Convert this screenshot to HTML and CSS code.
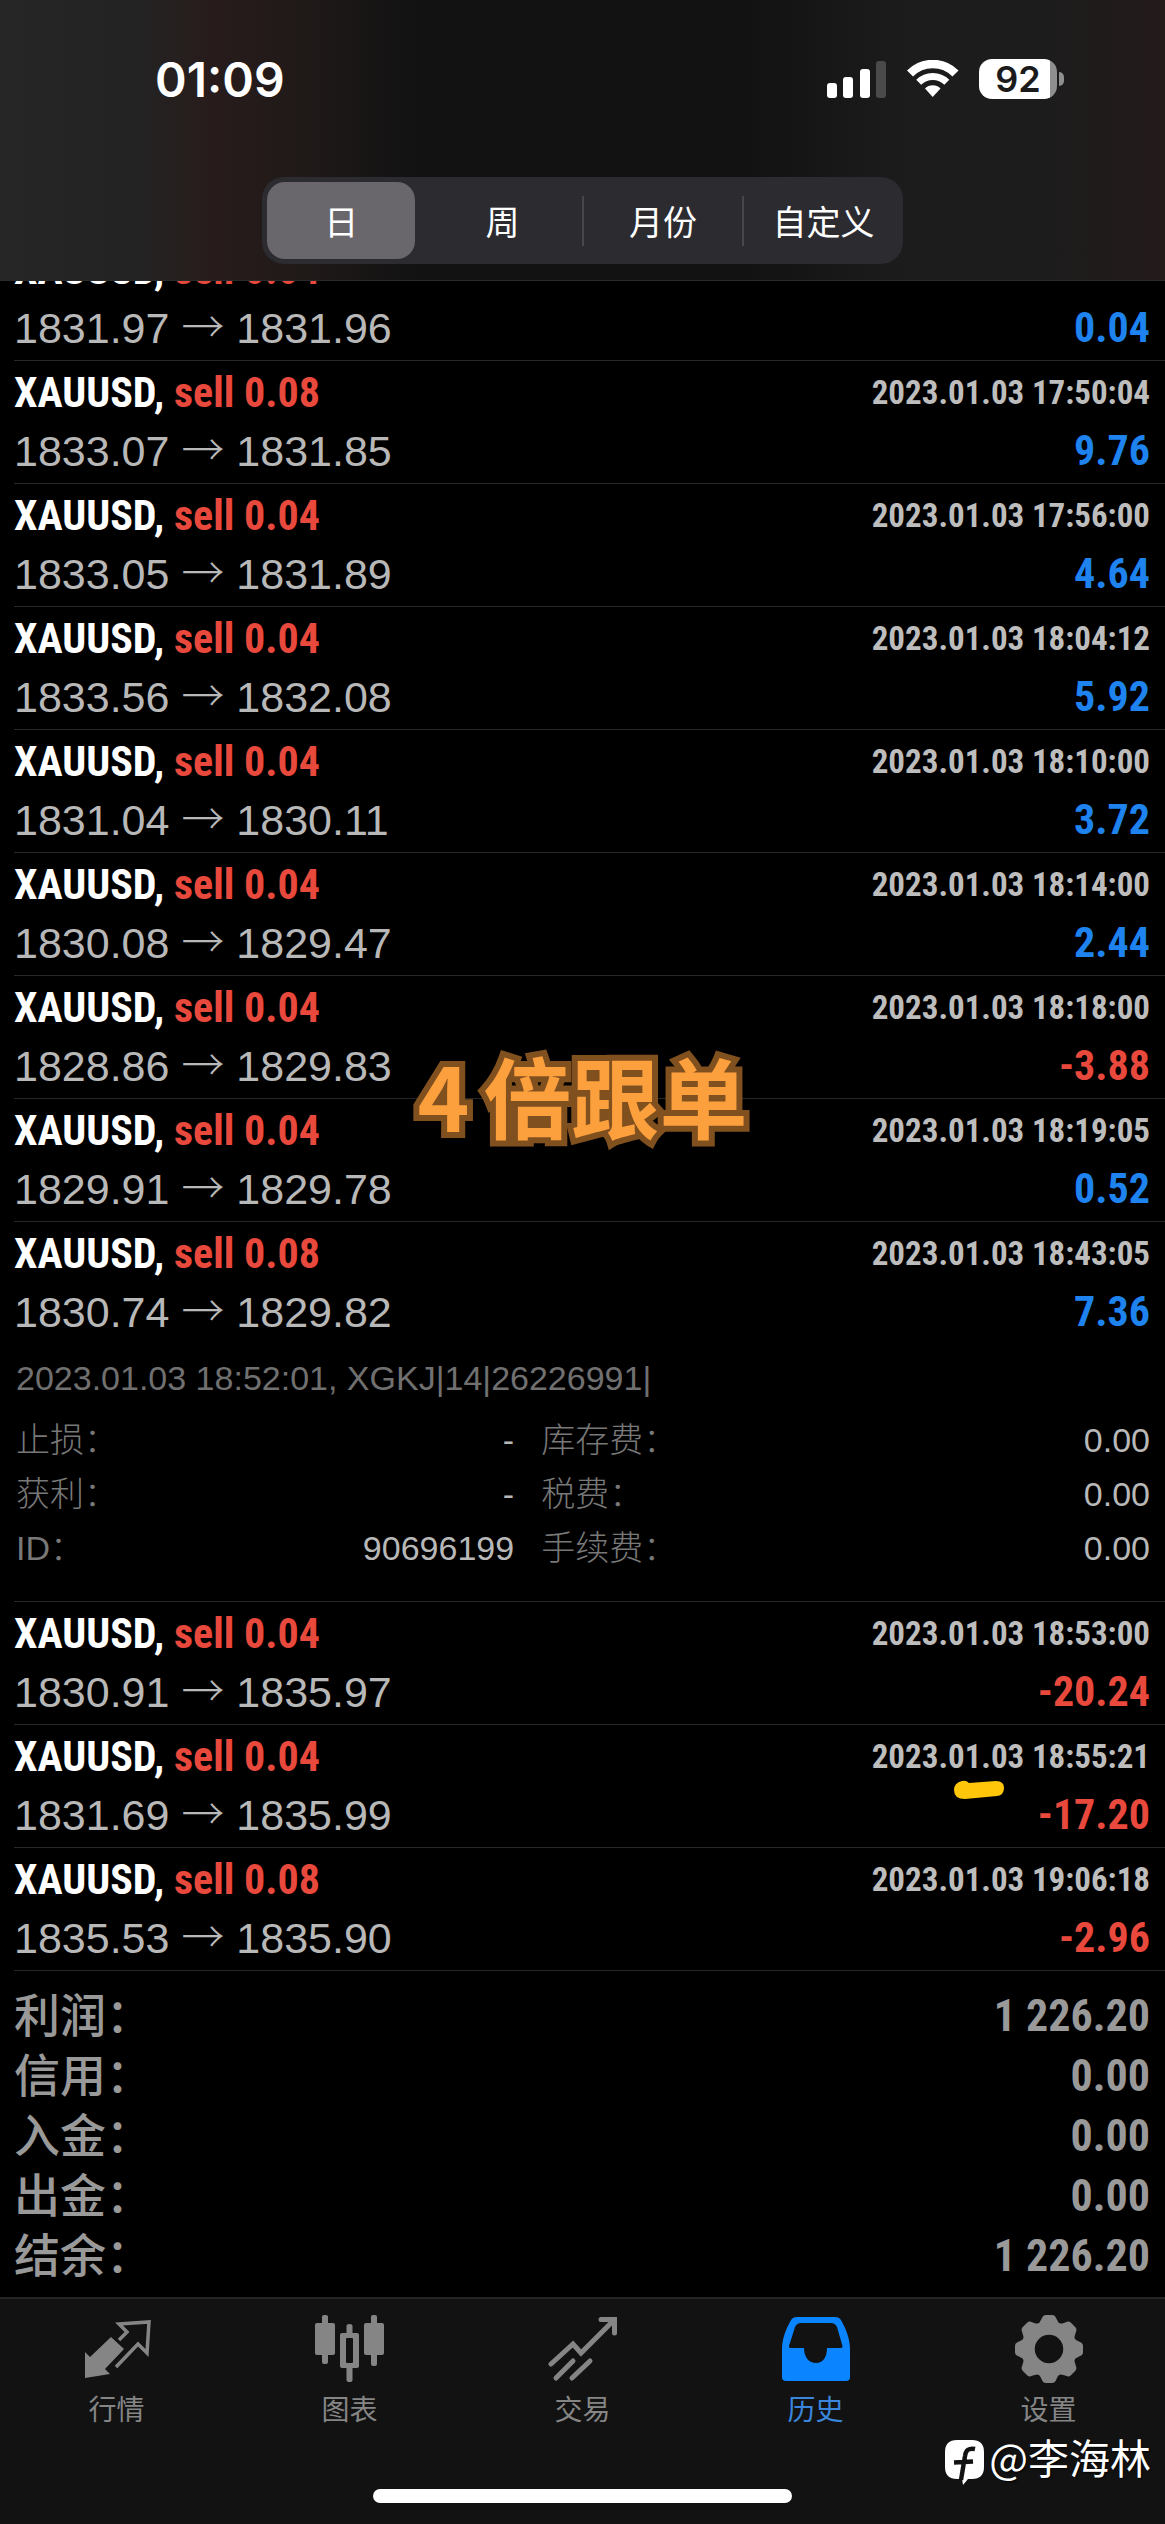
FILE: index.html
```html
<!DOCTYPE html>
<html lang="zh-CN">

<head>
  <meta charset="UTF-8">
  <meta name="viewport" content="width=device-width, initial-scale=1.0">
  <title>历史</title>
  <link rel="stylesheet" href="styles.css">
</head>

<body>
  <header class="header">
    <div class="status">
      <span class="time">01:09</span>
      <div class="status-icons">
        <svg class="signal" width="60" height="38" viewBox="0 0 60 38" fill="#fff">
          <rect x="0" y="23" width="10" height="15" rx="3" />
          <rect x="16" y="17" width="10" height="21" rx="3" />
          <rect x="33" y="9" width="10" height="29" rx="3" />
          <rect x="49" y="1" width="10" height="37" rx="3" fill="#4b4a4b" />
        </svg>
        <svg class="wifi" width="52" height="38" viewBox="0 0 52 38" fill="none" stroke="#fff">
          <path d="M3 13.5A32 32 0 0 1 48.500 13.500" stroke-width="8.500" />
          <path d="M11.700 22.200A20 20 0 0 1 39.800 22.200" stroke-width="7" />
          <path d="M18 28.500A11 11 0 0 1 33.500 28.500L25.700 37Z" fill="#fff" stroke="none" />
        </svg>
        <div class="battery"><span class="battery-level">92</span><span class="battery-tip"></span></div>
      </div>
    </div>
    <nav class="periods">
      <button type="button" class="active">日</button>
      <button type="button">周</button>
      <span class="sep"></span>
      <button type="button">月份</button>
      <span class="sep"></span>
      <button type="button">自定义</button>
    </nav>
  </header>

  <main class="history">
    <ul class="deals">
      <li class="deal">
        <div class="line"><b class="symbol">XAUUSD, <span class="sell">sell 0.04</span></b><time>2023.01.03 17:48:22</time></div>
        <div class="line"><span class="price">1831.97 <i>→</i> 1831.96</span><b class="profit">0.04</b></div>
      </li>
      <li class="deal">
        <div class="line"><b class="symbol">XAUUSD, <span class="sell">sell 0.08</span></b><time>2023.01.03 17:50:04</time></div>
        <div class="line"><span class="price">1833.07 <i>→</i> 1831.85</span><b class="profit">9.76</b></div>
      </li>
      <li class="deal">
        <div class="line"><b class="symbol">XAUUSD, <span class="sell">sell 0.04</span></b><time>2023.01.03 17:56:00</time></div>
        <div class="line"><span class="price">1833.05 <i>→</i> 1831.89</span><b class="profit">4.64</b></div>
      </li>
      <li class="deal">
        <div class="line"><b class="symbol">XAUUSD, <span class="sell">sell 0.04</span></b><time>2023.01.03 18:04:12</time></div>
        <div class="line"><span class="price">1833.56 <i>→</i> 1832.08</span><b class="profit">5.92</b></div>
      </li>
      <li class="deal">
        <div class="line"><b class="symbol">XAUUSD, <span class="sell">sell 0.04</span></b><time>2023.01.03 18:10:00</time></div>
        <div class="line"><span class="price">1831.04 <i>→</i> 1830.11</span><b class="profit">3.72</b></div>
      </li>
      <li class="deal">
        <div class="line"><b class="symbol">XAUUSD, <span class="sell">sell 0.04</span></b><time>2023.01.03 18:14:00</time></div>
        <div class="line"><span class="price">1830.08 <i>→</i> 1829.47</span><b class="profit">2.44</b></div>
      </li>
      <li class="deal">
        <div class="line"><b class="symbol">XAUUSD, <span class="sell">sell 0.04</span></b><time>2023.01.03 18:18:00</time></div>
        <div class="line"><span class="price">1828.86 <i>→</i> 1829.83</span><b class="profit loss">-3.88</b></div>
      </li>
      <li class="deal">
        <div class="line"><b class="symbol">XAUUSD, <span class="sell">sell 0.04</span></b><time>2023.01.03 18:19:05</time></div>
        <div class="line"><span class="price">1829.91 <i>→</i> 1829.78</span><b class="profit">0.52</b></div>
      </li>
      <li class="deal">
        <div class="line"><b class="symbol">XAUUSD, <span class="sell">sell 0.08</span></b><time>2023.01.03 18:43:05</time></div>
        <div class="line"><span class="price">1830.74 <i>→</i> 1829.82</span><b class="profit">7.36</b></div>
        <div class="details">
          <p class="comment">2023.01.03 18:52:01, XGKJ|14|26226991|</p>
          <dl>
            <div><dt>止损：</dt><dd>-</dd></div>
            <div><dt>库存费：</dt><dd>0.00</dd></div>
            <div><dt>获利：</dt><dd>-</dd></div>
            <div><dt>税费：</dt><dd>0.00</dd></div>
            <div><dt>ID：</dt><dd>90696199</dd></div>
            <div><dt>手续费：</dt><dd>0.00</dd></div>
          </dl>
        </div>
      </li>
      <li class="deal">
        <div class="line"><b class="symbol">XAUUSD, <span class="sell">sell 0.04</span></b><time>2023.01.03 18:53:00</time></div>
        <div class="line"><span class="price">1830.91 <i>→</i> 1835.97</span><b class="profit loss">-20.24</b></div>
      </li>
      <li class="deal">
        <div class="line"><b class="symbol">XAUUSD, <span class="sell">sell 0.04</span></b><time>2023.01.03 18:55:21</time></div>
        <div class="line"><span class="price">1831.69 <i>→</i> 1835.99</span><b class="profit loss">-17.20</b></div>
        <svg class="marker" width="52" height="20" viewBox="0 0 52 20">
          <path d="M9 1Q13 0 16 3L43 1Q51 1 51 8T44 16L12 19Q1 19 1 10Q1 3 9 1Z" fill="#ffc60a" />
        </svg>
      </li>
      <li class="deal">
        <div class="line"><b class="symbol">XAUUSD, <span class="sell">sell 0.08</span></b><time>2023.01.03 19:06:18</time></div>
        <div class="line"><span class="price">1835.53 <i>→</i> 1835.90</span><b class="profit loss">-2.96</b></div>
      </li>
    </ul>

    <dl class="totals">
      <div><dt>利润：</dt><dd>1 226.20</dd></div>
      <div><dt>信用：</dt><dd>0.00</dd></div>
      <div><dt>入金：</dt><dd>0.00</dd></div>
      <div><dt>出金：</dt><dd>0.00</dd></div>
      <div><dt>结余：</dt><dd>1 226.20</dd></div>
    </dl>

    <div class="caption"><span>4</span><span>倍跟单</span></div>
  </main>

  <footer class="footer">
    <nav class="tabs">
      <a href="#quotes">
        <svg width="70" height="68" viewBox="0 0 70 68" fill="none">
          <path d="M3 37L8 42L29 22L42 34L23 54L28 59L3 63Z" fill="#858585" />
          <path d="M37 25L45 17L37 9L67 7L65 38L56 29L34 52" stroke="#858585" stroke-width="3.500" />
        </svg>
        <span>行情</span>
      </a>
      <a href="#charts">
        <svg width="70" height="68" viewBox="0 0 70 68" fill="#858585">
          <rect x="0" y="8" width="20" height="32" rx="2" />
          <rect x="7" y="0" width="6" height="49" rx="2" />
          <path d="M27 18H42Q44 18 44 20V51Q44 53 42 53H27Q25 53 25 51V20Q25 18 27 18ZM31 24V47Q31 48 32 48H37Q38 48 38 47V24Q38 23 37 23H32Q31 23 31 24Z" fill-rule="evenodd" />
          <path d="M31.500 19V11Q31.500 9 34.500 9T37.500 11V19ZM31.500 52H37.500V65Q37.500 67 34.500 67T31.500 65Z" />
          <rect x="49" y="8" width="20" height="32" rx="2" />
          <rect x="56" y="0" width="6" height="51" rx="2" />
        </svg>
        <span>图表</span>
      </a>
      <a href="#trade">
        <svg width="70" height="68" viewBox="0 0 70 68" fill="none" stroke="#858585" stroke-width="5" stroke-linecap="round">
          <path d="M3 49L25 29L33 38L66 5" />
          <path d="M53 4.500H66.500V18" />
          <path d="M8 63L25 46M24 63L42 46" />
        </svg>
        <span>交易</span>
      </a>
      <a href="#history" class="active">
        <svg width="70" height="68" viewBox="0 0 70 68" fill="#0a84ff">
          <path fill-rule="evenodd" d="M1 34C1 24 5 14 9 7Q11 2 16 2H54Q59 2 61 7C65 14 69 24 69 34V62Q69 66 65 66H5Q1 66 1 62ZM9 33H23C23 42 28 48 35 48S46 42 46 33H60Q62 33 61.500 31L56 12Q54 8 50 8H20Q16 8 14 12L8 31Q8 33 9 33Z" />
        </svg>
        <span>历史</span>
      </a>
      <a href="#settings">
        <svg width="70" height="68" viewBox="0 0 70 68">
          <circle cx="35" cy="34" r="21" fill="none" stroke="#858585" stroke-width="13.500" />
          <g fill="#858585">
            <path id="tooth" d="M22 11Q26 8 28 3Q29 0 32 0H38Q41 0 42 3Q44 8 48 11Z" />
            <use href="#tooth" transform="rotate(45 35 34)" />
            <use href="#tooth" transform="rotate(90 35 34)" />
            <use href="#tooth" transform="rotate(135 35 34)" />
            <use href="#tooth" transform="rotate(180 35 34)" />
            <use href="#tooth" transform="rotate(225 35 34)" />
            <use href="#tooth" transform="rotate(270 35 34)" />
            <use href="#tooth" transform="rotate(315 35 34)" />
          </g>
        </svg>
        <span>设置</span>
      </a>
    </nav>
    <div class="home-bar"></div>
    <div class="watermark">
      <svg width="40" height="46" viewBox="0 0 40 46">
        <path d="M12 0H27Q39 0 39 12V27Q39 39 27 39H23L18 45L17 39H12Q0 39 0 27V12Q0 0 12 0Z" fill="#fff" />
        <path d="M30 9Q21 7 20 16L16 40M9 22.500L28 21.500" fill="none" stroke="#121212" stroke-width="4.500" />
      </svg>
      <span>@李海林</span>
    </div>
  </footer>
</body>

</html>
```
FILE: styles.css
```css
* {
  box-sizing: border-box;
}

body {
  margin: 0;
  background: #000;
  color: #fff;
  font-family: "Liberation Sans", "Noto Sans CJK SC", sans-serif;
}

ul,
dl,
dd,
p {
  margin: 0;
  padding: 0;
  list-style: none;
}

button {
  border: none;
  padding: 0;
  background: none;
  color: inherit;
  font: inherit;
}

/* header */
.header {
  position: relative;
  z-index: 1;
  padding-bottom: 16px;
  border-bottom: 1px solid #2a2a2a;
  background: linear-gradient(90deg, #262626 0%, #242323 12%, #271c1b 18%, #211a19 25%, #121212 36%, #121212 64%, #1c1c1c 78%, #1d1c1c 90%, #241b1b 100%);
}

.status {
  display: flex;
  align-items: center;
  justify-content: space-between;
  height: 158px;
  padding: 0 101px 0 155px;
  font-family: Inter, sans-serif;
  font-weight: 600;
}

.time {
  font-size: 48px;
}

.status-icons {
  display: flex;
  align-items: center;
  gap: 20px;
}

.battery {
  display: flex;
  align-items: center;
  gap: 2px;
}

.battery-level {
  width: 78px;
  border-radius: 13px;
  background: linear-gradient(90deg, #fff 71px, #8f8f8f 71px);
  color: #1b1b1b;
  font-size: 36px;
  line-height: 40px;
  text-align: center;
}

.battery-tip {
  width: 5px;
  height: 14px;
  border-radius: 0 7px 7px 0;
  background: #8f8f8f;
}

.periods {
  display: flex;
  align-items: center;
  width: 55%;
  margin: 19px auto 0;
  padding: 5px 0 5px 5px;
  border-radius: 22px;
  background: #2c2b2f;
}

.periods button {
  flex: 1;
  height: 77px;
  border-radius: 18px;
  font-size: 34px;
}

.periods .active {
  flex: 0 0 148px;
  margin-right: 8px;
  background: #6a676c;
}

.sep {
  width: 2px;
  height: 50px;
  background: #48474b;
}

/* deals */
.history {
  position: relative;
}

.deals {
  margin-top: -43px;
}

.deal {
  position: relative;
  margin-left: 14px;
  padding: 3px 15px 3px 0;
  border-bottom: 1px solid #272727;
}

.line {
  display: flex;
  justify-content: space-between;
  height: 58px;
  line-height: 58px;
}

.symbol,
.profit,
time,
.totals dd {
  font-family: "Roboto Condensed", "Liberation Sans", sans-serif;
  font-weight: 700;
}

.symbol,
.profit {
  font-size: 42px;
}

.sell {
  color: #e8493c;
}

.profit {
  color: #1e83ee;
}

.profit.loss {
  color: #e8493c;
}

time {
  color: #bdbdbd;
  font-size: 33px;
}

.price {
  color: #b8b8b8;
  font-size: 43px;
}

/* long thin arrow */
.price i {
  font-family: "Noto Sans CJK SC", sans-serif;
  font-style: normal;
  font-weight: 300;
  line-height: 1;
}

.details {
  padding: 10px 0 23px 2px;
  color: #707070;
  font-size: 34px;
  line-height: 54px;
}

.details .comment {
  margin-bottom: 8px;
}

.details dl {
  display: grid;
  grid-template-columns: 9fr 11fr;
  column-gap: 27px;
}

.details dt {
  color: #787878;
  font-weight: 300;
}

.details dl div,
.totals div {
  display: flex;
  justify-content: space-between;
}

.details dd {
  color: #b8b8b8;
}

.marker {
  position: absolute;
  top: 55px;
  right: 160px;
}

/* totals */
.totals {
  padding: 15px 15px 11px 14px;
  color: #999;
  font-size: 46px;
  font-weight: 500;
  line-height: 60px;
}

.totals dd {
  font-size: 44px;
}

.caption {
  position: absolute;
  top: 796px;
  right: 0;
  left: 0;
  display: flex;
  justify-content: center;
  gap: 14px;
  color: #fc9f3d;
  font-family: "Noto Sans CJK SC", sans-serif;
  font-size: 88px;
  font-weight: 700;
  line-height: 120px;
  -webkit-text-stroke: 12px #80501f;
  paint-order: stroke fill;
}

/* bottom bar */
.footer {
  position: relative;
  padding: 16px 0 21px;
  border-top: 2px solid #262626;
  background: #121212;
}

.tabs {
  display: flex;
}

.tabs a {
  display: flex;
  flex: 1;
  flex-direction: column;
  align-items: center;
  gap: 8px;
  color: #858585;
  font-size: 28px;
  line-height: 40px;
  text-decoration: none;
}

.tabs .active {
  color: #3a86dc;
}

.home-bar {
  width: 36%;
  height: 14px;
  margin: 58px auto 0;
  border-radius: 7px;
  background: #fff;
}

.watermark {
  position: absolute;
  right: 14px;
  bottom: 38px;
  display: flex;
  align-items: flex-end;
  gap: 4px;
  font-family: "Noto Sans CJK SC", sans-serif;
  font-size: 41px;
  line-height: 60px;
  text-shadow: 1px 1px 2px #000;
}
```
